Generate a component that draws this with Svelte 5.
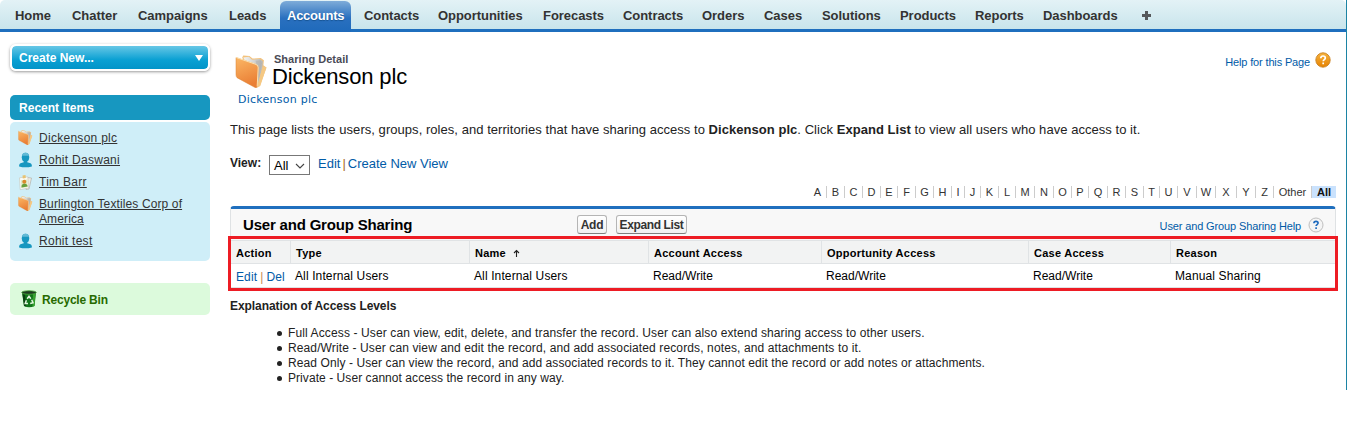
<script>
  const tabs = [
    ['Home', 57], ['Chatter', 66], ['Campaigns', 91], ['Leads', 58], ['Accounts', 77],
    ['Contacts', 74], ['Opportunities', 105], ['Forecasts', 80], ['Contracts', 79],
    ['Orders', 62], ['Cases', 58], ['Solutions', 78], ['Products', 75], ['Reports', 68],
    ['Dashboards', 90]
  ];
  const recent = [
    ['folder', 'Dickenson plc'],
    ['person', 'Rohit Daswani'],
    ['contact', 'Tim Barr'],
    ['folder', 'Burlington Textiles Corp of America'],
    ['person', 'Rohit test']
  ];
  const letters = [
    ['A', 18], ['B', 18], ['C', 18], ['D', 18], ['E', 17], ['F', 18], ['G', 18], ['H', 18],
    ['I', 13], ['J', 16], ['K', 18], ['L', 17], ['M', 19], ['N', 19], ['O', 18], ['P', 17],
    ['Q', 19], ['R', 18], ['S', 18], ['T', 16], ['U', 18], ['V', 19], ['W', 19], ['X', 21],
    ['Y', 19], ['Z', 18], ['Other', 38]
  ];
  const columns = ['Action', 'Type', 'Name', 'Account Access', 'Opportunity Access', 'Case Access', 'Reason'];
  const row = ['All Internal Users', 'All Internal Users', 'Read/Write', 'Read/Write', 'Read/Write', 'Manual Sharing'];
  const levels = [
    'Full Access - User can view, edit, delete, and transfer the record. User can also extend sharing access to other users.',
    'Read/Write - User can view and edit the record, and add associated records, notes, and attachments to it.',
    'Read Only - User can view the record, and add associated records to it. They cannot edit the record or add notes or attachments.',
    'Private - User cannot access the record in any way.'
  ];
</script>

{#snippet folder(size)}
  <svg width={size} height={size} viewBox="0 0 32 32">
    <defs>
      <linearGradient id="fo" x1="0" y1="0" x2="0.3" y2="1">
        <stop offset="0" stop-color="#fbb765" /><stop offset="1" stop-color="#ea7f35" />
      </linearGradient>
      <linearGradient id="pg" x1="0" y1="0" x2="1" y2="0">
        <stop offset="0" stop-color="#f4f4f2" /><stop offset="1" stop-color="#b9b9b7" />
      </linearGradient>
    </defs>
    <path d="M7 2.500L8 .5 14 1 17 3.500 25 3 28 5 27.500 10 30.500 12 24 30 18 30z" fill="#f3c27c" />
    <path d="M8 2.500L13.500 1.800 16.500 4.500 24 3.800 27 6 26.500 12 22 29z" fill="url(#pg)" />
    <path d="M20 5.500L25 5 26 8 23 26z" fill="#a5a5a3" opacity=".4" />
    <path d="M27 11L30.500 12 24.500 30 21 32z" fill="#f5c883" />
    <path d="M1 2.500L20 9Q22.500 10 22.500 12L21.500 30.500Q21 32.500 19 31.300L2 22Q1 21 1 19z" fill="url(#fo)" stroke="#dc812f" stroke-width=".5" />
    <path d="M1 2.500L20 9Q22.500 10 22.500 12L21.500 30.500" fill="none" stroke="#fde0ad" stroke-width="1" />
  </svg>
{/snippet}

{#snippet person()}
  <svg width="15" height="16" viewBox="0 0 15 16">
    <ellipse cx="7.500" cy="5.200" rx="3.700" ry="4.500" fill="#1797c0" />
    <path d="M5.800 8.500h3.400v1.700l3.300 1c1.100.4 1.400 1.600 1.400 3.200Q7.500 16.300 1.100 14.400c0-1.600.3-2.800 1.400-3.200l3.300-1z" fill="#1797c0" />
    <path d="M4 3.800C4.300 1.700 5.300.8 7.500.8s3.200.9 3.500 3z" fill="#62bad6" />
  </svg>
{/snippet}

{#snippet contact()}
  <svg width="15" height="17" viewBox="0 0 15 17">
    <path d="M9.500 3.500l4 .5-2.500 11-3 .5z" fill="#efece3" stroke="#aaa89f" stroke-width=".6" />
    <path d="M1.500 3.800L9.800 2.800 10.600 14 2.200 15.600z" fill="#fcfbf5" stroke="#c6c4b7" stroke-width=".6" />
    <path d="M4.500 1.500l3-.5.3 3-3 .5z" fill="#e8c272" />
    <path d="M3 6.200L9.300 5.500 9.700 13 3.300 14z" fill="#dbeac2" />
    <circle cx="6.300" cy="7.800" r="2" fill="#dc8a2c" />
    <path d="M3.500 13.500c-.2-2.500.8-3.500 2.800-3.700s3.100.8 3.300 2.800z" fill="#6a9f3b" />
  </svg>
{/snippet}

<div class="page">
  <nav>
    {#each tabs as [name, w]}
      <div class="slot" style="width:{w}px"><a class:active={name === 'Accounts'}>{name}</a></div>
    {/each}
    <svg class="plus" width="13" height="13" viewBox="0 0 13 13"><path d="M5 2h3v3h3v3H8v3H5V8H2V5h3z" fill="#55585b" /></svg>
  </nav>

  <div class="body">
    <aside>
      <div class="create"><span>Create New...</span><i></i></div>
      <h2>Recent Items</h2>
      <ul class="recent">
        {#each recent as [kind, name]}
          <li>
            <span class="ico">
              {#if kind === 'folder'}{@render folder(15)}{:else if kind === 'person'}{@render person()}{:else}{@render contact()}{/if}
            </span>
            <a class:long={name.length > 20}>{name}</a>
          </li>
        {/each}
      </ul>
      <div class="bin">
        <svg width="16" height="18" viewBox="0 0 16 18">
          <path d="M1 2.500L15 2.500 13.500 16Q8 18.500 3 16z" fill="#12751b" />
          <path d="M1.500 4L4 4.500 5 16.500 3 16z" fill="#0a3f10" />
          <path d="M12 4l2.500-.5L13.500 16l-2 .7z" fill="#37a32f" />
          <ellipse cx="8" cy="2.500" rx="7.300" ry="1.800" fill="#1d3b20" stroke="#4cab3d" stroke-width=".8" />
          <path d="M6.200 8.800L8 6.200l1.800 2.600M10.700 9.800l1.300 3-2.800.7M7 13.500H4.200l1.200-3.200" fill="none" stroke="#e4f5e0" stroke-width="1.500" />
        </svg>
        <b>Recycle Bin</b>
      </div>
    </aside>

    <main>
      <header>
        <div class="bigicon">{@render folder(33)}</div>
        <div class="titles">
          <div class="kind">Sharing Detail</div>
          <h1>Dickenson plc</h1>
        </div>
        <div class="help">
          <a>Help for this Page</a>
          <svg width="16" height="16" viewBox="0 0 16 16">
            <defs><linearGradient id="or" x1="0" y1="0" x2="0" y2="1"><stop offset="0" stop-color="#f6b33f" /><stop offset="1" stop-color="#e68200" /></linearGradient></defs>
            <circle cx="8" cy="8" r="7.200" fill="url(#or)" stroke="#c98222" stroke-width=".9" />
            <path d="M5.800 6.300C5.800 4.700 6.700 4 8 4s2.300.8 2.300 2c0 1.600-2.100 1.600-2.100 3.300M8.200 10.500v1.800" fill="none" stroke="#fff" stroke-width="1.700" />
          </svg>
        </div>
      </header>
      <a class="crumb">Dickenson plc</a>
      <p class="intro">This page lists the users, groups, roles, and territories that have sharing access to <b>Dickenson plc</b>. Click <b>Expand List</b> to view all users who have access to it.</p>

      <div class="view">
        <b>View:</b>
        <div class="select"><span>All</span>
          <svg width="10" height="7" viewBox="0 0 10 7"><path d="M1 1l4 4 4-4" fill="none" stroke="#444" stroke-width="1.100" /></svg>
        </div>
        <span class="links"><a>Edit</a><i>|</i><a>Create New View</a></span>
      </div>

      <div class="rolodex">
        {#each letters as [l, w]}<span style="width:{w}px">{l}</span>{/each}<b>All</b>
      </div>

      <section class="panel">
        <div class="bar">
          <h3>User and Group Sharing</h3>
          <button class="add">Add</button>
          <button class="expand">Expand List</button>
          <div class="phelp">
            <a>User and Group Sharing Help</a>
            <svg width="16" height="16" viewBox="0 0 16 16">
              <circle cx="8" cy="8" r="7" fill="#f4f4f4" stroke="#bfbfbf" />
              <path d="M5.900 6.300C5.900 5 6.700 4.400 8 4.400s2.100.7 2.100 1.700c0 1.500-2 1.500-2 3M8.100 10.200v1.700" fill="none" stroke="#1b68bd" stroke-width="1.600" />
            </svg>
          </div>
        </div>
        <div class="grid head">
          {#each columns as c}
            <div><span>{c}</span>{#if c === 'Name'}<svg width="7" height="9" viewBox="0 0 7 9"><path d="M3.500 8V1.500M1 4l2.500-2.500L6 4" fill="none" stroke="#222" stroke-width="1.100" /></svg>{/if}</div>
          {/each}
        </div>
        <div class="grid data">
          <div class="acts"><a>Edit</a><i>|</i><a>Del</a></div>
          {#each row as v}<div class:tight={v === 'Read/Write'}>{v}</div>{/each}
        </div>
        <div class="frame"></div>
      </section>

      <h4>Explanation of Access Levels</h4>
      <ul class="levels">
        {#each levels as l}<li>{l}</li>{/each}
      </ul>
    </main>
  </div>
</div>

<style>
  :global(body) { background: #fff; }
  .page { box-sizing: border-box; width: 1347px; height: 390px; border-right: 1px solid #1c84a4; font: 12px/15px "Liberation Sans", Arial, sans-serif; color: #222; overflow: hidden; white-space: nowrap; }
  h1, h2, h3, h4, p, ul { margin: 0; padding: 0; }
  ul { list-style: none; }
  i { font-style: normal; }
  a { color: #015ba7; }
  nav { box-sizing: border-box; height: 32px; padding-left: 8px; display: flex; background: linear-gradient(#e3f2f6, #c9e5ec); border-bottom: 3px solid #1f6fbe; border-radius: 5px 5px 0 0; }
  .slot { display: flex; }
  nav a { box-sizing: border-box; height: 29px; padding: 7px 7px 0; font-weight: bold; font-size: 13px; line-height: 17px; letter-spacing: -.05px; color: #333; }
  nav a.active { width: 71px; height: 31px; margin-top: 1px; padding-top: 6px; color: #fff; background: linear-gradient(#7eacd9, #2a70bf 55%, #1f6abb); border-radius: 6px 6px 0 0; text-shadow: 0 1px 1px #165391; letter-spacing: -.25px; }
  .plus { margin: 9px 0 0 14px; }
  .body { display: flex; }
  aside { width: 200px; padding: 12px 20px 0 10px; flex: none; }
  .create { box-sizing: border-box; height: 27px; border: 2px solid #fff; border-radius: 6px; background: linear-gradient(#67c7e6, #0aa0d3 60%, #0294c8); background-clip: padding-box; box-shadow: 0 1px 3px #999; display: flex; align-items: center; justify-content: space-between; padding: 0 5px 0 7px; color: #fff; font-weight: bold; }
  .create span { padding-top: 1px; }
  .create i { border: 4px solid transparent; border-top: 6px solid #fff; border-bottom: 0; }
  h2 { height: 25px; margin-top: 24px; padding-left: 9px; background: #1797c0; border-radius: 5px; color: #fff; font-size: 12px; line-height: 26px; letter-spacing: .02px; }
  .recent { box-sizing: border-box; height: 139px; margin-top: 2px; padding: 9px 8px 0; background: #cfeef8; border-radius: 5px; }
  .recent li { display: flex; margin-bottom: 7px; }
  .ico { width: 21px; height: 15px; flex: none; }
  .ico svg { display: block; margin-top: -1px; }
  .recent a { color: #333; text-decoration: underline; white-space: normal; letter-spacing: .28px; }
  .recent a.long { letter-spacing: .12px; }
  .bin { height: 32px; margin-top: 22px; padding-left: 11px; border-radius: 5px; background: #dcfadc; display: flex; align-items: center; gap: 5px; color: #286a00; letter-spacing: -.2px; }
  .bin b { padding-top: 3px; }
  main { width: 1106px; }
  header { display: flex; height: 57px; }
  .bigicon { width: 42px; padding: 23px 0 0 5px; box-sizing: border-box; }
  .kind { margin: 21px 0 0 2px; font-size: 11px; line-height: 13px; font-weight: bold; color: #4a4a56; letter-spacing: .03px; }
  h1 { font-weight: normal; font-size: 22px; line-height: 22px; color: #000; letter-spacing: -.15px; }
  .help { margin: 20px 5px 0 auto; display: flex; gap: 5px; font-size: 11px; line-height: 20px; letter-spacing: -.15px; }
  .crumb { display: block; margin: 3px 0 0 8px; font: 11px/15px "DejaVu Sans", Verdana, sans-serif; letter-spacing: .25px; }
  .intro { margin-top: 15px; font-size: 13px; line-height: 16px; letter-spacing: .045px; }
  .view { display: flex; height: 20px; margin-top: 17px; font-size: 12px; }
  .view > b { width: 39px; padding-top: 1px; }
  .select { box-sizing: border-box; width: 41px; height: 20px; border: 1px solid #777; display: flex; align-items: center; justify-content: space-between; padding: 2px 4px 0; color: #000; font-size: 13px; }
  .select span { margin-top: -2px; }
  .links { margin-left: 8px; padding-top: 1px; font-size: 13px; }
  .links i { margin: 0 2px; color: #a86a1f; }
  .rolodex { display: flex; justify-content: flex-end; height: 12px; margin-top: 11px; font-size: 11px; line-height: 13px; color: #333; }
  .rolodex span { box-sizing: border-box; border-right: 1px solid #ccc; text-align: center; }
  .rolodex b { width: 24px; background: #cae2fd; color: #111; text-align: center; }
  .panel { position: relative; box-sizing: border-box; height: 82px; margin-top: 8px; border: 1px solid #dfe2e4; border-top: 3px solid #1f6fbe; border-radius: 4px 4px 0 0; }
  .bar { display: flex; height: 31px; background: #f8f8f8; padding-top: 6px; box-sizing: border-box; }
  h3 { width: 334px; margin-left: 12px; font-size: 15px; line-height: 20px; color: #000; letter-spacing: -.19px; }
  button { box-sizing: border-box; height: 19px; border: 1px solid #b5b5b5; border-bottom-color: #7f7f7f; border-radius: 3px; background: linear-gradient(#fff, #f1f1f1); font: bold 12px/15px "Liberation Sans", Arial, sans-serif; color: #333; padding: 1px 0 0; }
  .add { width: 30px; letter-spacing: -.2px; }
  .expand { width: 71px; margin-left: 9px; letter-spacing: -.37px; }
  .phelp { display: flex; gap: 7px; margin: 2px 11px 0 auto; font-size: 11px; line-height: 18px; letter-spacing: -.13px; }
  .grid { display: grid; grid-template-columns: 59px 179px 179px 173px 207px 142px 165px; }
  .head { box-sizing: border-box; height: 24px; border-top: 1px solid #e0e3e5; border-bottom: 1px solid #e0e3e5; background: #f2f3f3; font-weight: bold; font-size: 11px; line-height: 25px; color: #000; letter-spacing: .25px; }
  .head div { height: 22px; border-left: 1px solid #e0e3e5; padding-left: 5px; }
  .head div:first-child { border: 0; }
  .head svg { margin-left: 7px; vertical-align: -1px; }
  .data { height: 22px; font-size: 12px; line-height: 24px; color: #000; letter-spacing: .12px; }
  .data div { padding-left: 5px; }
  .data .tight { letter-spacing: 0; }
  .data .acts { padding-top: 1px; height: 21px; }
  .data i { margin: 0 3px; color: #c88a52; }
  .frame { position: absolute; left: -3px; top: 27px; width: 1104px; height: 49px; border: 3px solid #ed1c24; }
  h4 { margin-top: 10px; font-size: 12px; line-height: 16px; letter-spacing: -.07px; }
  .levels { margin: 12px 0 0 58px; letter-spacing: .12px; }
  .levels li { display: flex; align-items: center; }
  .levels li:nth-child(3) { letter-spacing: .09px; }
  .levels li:nth-child(4) { letter-spacing: .06px; }
  .levels li::before { content: ""; width: 5px; height: 5px; margin: 0 6px 0 -11px; border-radius: 50%; background: #222; }
</style>
